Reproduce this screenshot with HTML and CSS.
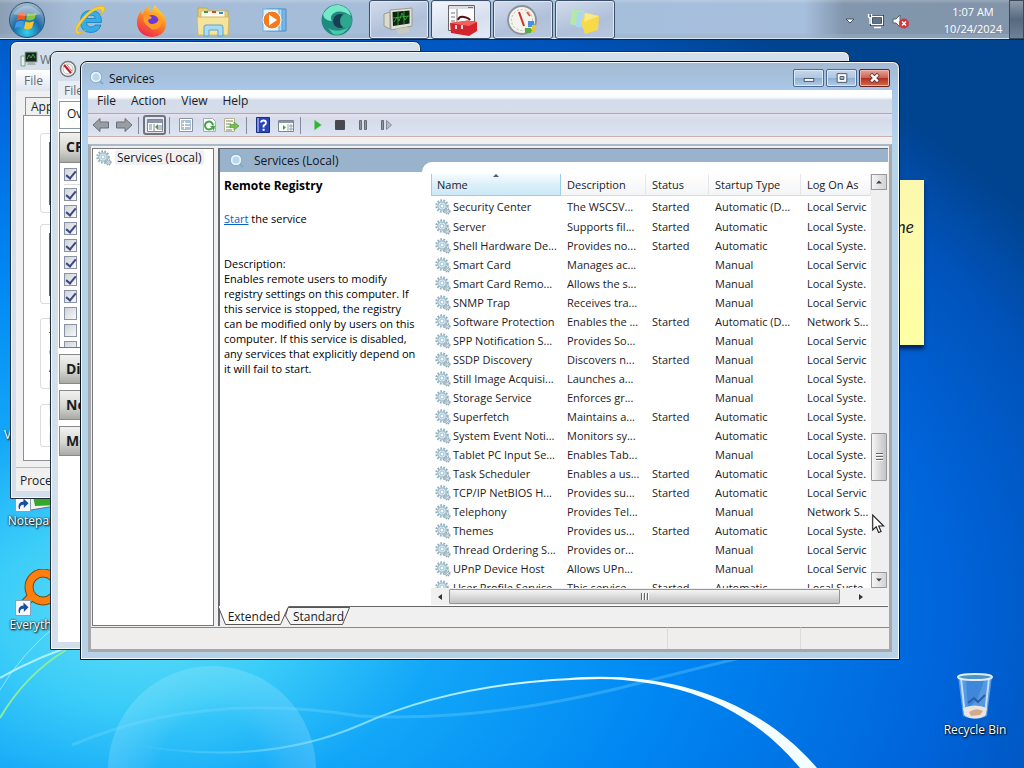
FILE: index.html
```html
<!DOCTYPE html>
<html lang="en">
<head>
<meta charset="utf-8">
<title>Services</title>
<link rel="stylesheet" href="styles.css">
</head>
<body>
<svg class="defs" width="0" height="0" aria-hidden="true">
  <defs>
    <symbol id="gear" viewBox="0 0 16 16">
      <circle cx="7" cy="7" r="5.6" fill="none" stroke="#8fb0c0" stroke-width="2.2" stroke-dasharray="1.7 1.3"/>
      <circle cx="7" cy="7" r="4.2" fill="#dcebf2" stroke="#9dbdcb" stroke-width="1.2"/>
      <circle cx="7" cy="7" r="2" fill="#fff" stroke="#8fb3c4" stroke-width=".8"/>
      <circle cx="12.3" cy="12.3" r="2.6" fill="#cfdde4" stroke="#87a0ac" stroke-width="1.3" stroke-dasharray="1.3 .8"/>
      <circle cx="12.3" cy="12.3" r="1" fill="#fff" stroke="#87a0ac" stroke-width=".6"/>
    </symbol>
    <symbol id="lens" viewBox="0 0 16 16">
      <circle cx="7" cy="7" r="4.500" fill="#b9d6ea" stroke="#e2f2fa" stroke-width="2"/>
      <circle cx="7" cy="7" r="5.800" fill="none" stroke="#7fa6c2" stroke-width=".8"/>
      <path d="M11 11.500l3 2.500" stroke="#86a8c0" stroke-width="2"/>
    </symbol>
    <symbol id="shortcut" viewBox="0 0 16 16">
      <rect x=".5" y=".5" width="15" height="15" fill="#f6faff" stroke="#8aa0b8"/>
      <path d="M4 13C2.500 8.500 5 5.500 8.500 5.500V2.500L13.500 7.200 8.800 12V8.800C6.300 8.600 4.600 10 5 13Z" fill="#1a4f9e"/>
    </symbol>
  </defs>
</svg>

<main class="desktop">
  <svg class="wallpaper" viewBox="0 0 1024 768" preserveAspectRatio="none" aria-hidden="true">
    <defs>
      <radialGradient id="sky" gradientUnits="userSpaceOnUse" cx="0" cy="0" r="1" gradientTransform="translate(140 610) scale(1080 700)">
        <stop offset="0" stop-color="#62def6"/><stop offset=".14" stop-color="#3accf8"/><stop offset=".28" stop-color="#12a6f8"/>
        <stop offset=".5" stop-color="#0086f2"/><stop offset=".75" stop-color="#0064da"/><stop offset=".9" stop-color="#0052b8"/><stop offset="1" stop-color="#00438f"/>
      </radialGradient>
      <radialGradient id="orb" cx=".5" cy=".5" r=".5"><stop offset=".5" stop-color="#fff" stop-opacity="0"/><stop offset="1" stop-color="#bff2ff" stop-opacity=".22"/></radialGradient>
      <linearGradient id="arc" x1="0" x2="1"><stop offset="0" stop-color="#8fe4ff" stop-opacity="0"/><stop offset=".6" stop-color="#8fe4ff"/><stop offset="1" stop-color="#fff"/></linearGradient>
    </defs>
    <rect width="1024" height="768" fill="url(#sky)"/>
    <circle cx="212" cy="770" r="104" fill="url(#orb)"/>
    <path d="M0 678Q40 655 90 640" fill="none" stroke="#c9f8ff" stroke-width="2" opacity=".8"/>
    <path d="M0 690Q20 655 60 622" fill="none" stroke="#c9f8ff" stroke-width="1" opacity=".6"/>
    <path d="M0 718Q25 675 66 650" fill="none" stroke="#8dec9c" stroke-width="2"/>
    <path d="M72 745Q200 690 360 716Q480 722 620 688Q690 670 740 658" fill="none" stroke="#7fdcff" stroke-width="3" opacity=".3"/>
    <path d="M130 744Q260 768 360 725Q460 680 600 678" fill="none" stroke="url(#arc)" stroke-width="2"/>
    <path d="M570 678C655 671 752 692 817 768H800C735 690 650 676 570 679Z" fill="#f4fdff"/>
  </svg>

  <div class="shortcut-label stray">V</div>
  <a class="shortcut notepad" href="#">
    <svg width="48" height="48" viewBox="0 0 48 48"><path d="M8 10L44 6 46 40 10 46Z" fill="#f4f4ee" stroke="#66a"/><path d="M14 12L46 12 44 40 20 41Z" fill="#35a82a"/><path d="M18 16h20v20" stroke="#1a6d18" fill="none"/><use href="#shortcut" x="0" y="31" width="16" height="16"/></svg>
    <span>Notepad++</span>
  </a>
  <a class="shortcut everything" href="#">
    <svg width="48" height="48" viewBox="0 0 48 48"><path d="M15 29L9 35" stroke="#7a4a10" stroke-width="9"/><circle cx="28" cy="18" r="14" fill="none" stroke="#7a4a10" stroke-width="9"/><circle cx="28" cy="18" r="14" fill="none" stroke="#ff7f0e" stroke-width="7"/><path d="M16 28L10 34" stroke="#ff7f0e" stroke-width="7"/><use href="#shortcut" x="0" y="31" width="16" height="16"/></svg>
    <span>Everything</span>
  </a>
  <a class="shortcut recycle" href="#">
    <svg width="48" height="48" viewBox="0 0 48 48">
      <path d="M7 4L41 4 36 44Q24 50 12 44Z" fill="#9cc8f2" fill-opacity=".55"/>
      <path d="M10 6L14 43M38 6L34 43" stroke="#e6f6ff" stroke-width="2" opacity=".75"/>
      <path d="M15 8L17 36 26 28 33 9Z" fill="#2c78cf" opacity=".55"/>
      <path d="M17 31l6-5 4 4 7-7" fill="none" stroke="#285ea8" stroke-width="2"/>
      <path d="M12 36Q24 31 36 36L34 44Q24 49 14 44Z" fill="#e9e6e0"/><path d="M18 40q7-5 14-1l-3 4-9 1Z" fill="#d6a98b"/>
      <ellipse cx="24" cy="5" rx="17" ry="3" fill="#4d93c8" stroke="#dcecf3" stroke-width="2"/>
    </svg>
    <span>Recycle Bin</span>
  </a>
  <div class="note">ne</div>

  <section class="window taskmgr" aria-label="Windows Task Manager">
    <header class="titlebar"><svg width="18" height="16" viewBox="0 0 18 16"><path d="M1 5h4v10H1z" fill="#e8efe8" stroke="#80a088"/><path d="M5 1h12v10H5z" fill="#16261b" stroke="#9aa"/><path d="M7 8l2-4 2 3 2-4 2 4" fill="none" stroke="#37a44a"/><path d="M8 11h6l2 3H7z" fill="#a9b0b0"/></svg><span>W</span></header>
    <div class="client">
      <nav class="menubar"><button>File</button></nav>
      <div class="tm-tabs"><button>App</button></div>
      <div class="tm-page">
        <div class="group graph"><i></i></div>
        <div class="group graph second"><i></i></div>
        <div class="group stats"><b>P</b><b>T</b><b>C</b><b>A</b><b>P</b></div>
        <div class="group kernel"><b>K</b><b>P</b><b>N</b></div>
      </div>
      <footer class="tm-status">Processes</footer>
    </div>
  </section>

  <section class="window resmon" aria-label="Resource Monitor">
    <header class="titlebar"><svg width="18" height="18" viewBox="0 0 18 18"><circle cx="9" cy="9" r="7.500" fill="#f9fafa" stroke="#777" stroke-width="1.500"/><circle cx="9" cy="9" r="5" fill="none" stroke="#bbb"/><path d="M5 5l7 8" stroke="#c01c20" stroke-width="2"/><path d="M8 5l5 6" stroke="#c66" /></svg></header>
    <div class="client">
      <nav class="menubar"><button>File</button></nav>
      <div class="rm-body">
        <div class="rm-tab">Ov</div>
        <div class="rm-list">
          <h3>CPU</h3>
          <div class="rm-checks">
            <input type="checkbox" checked aria-label="All"><hr>
            <input type="checkbox" checked aria-label="Process 1"><input type="checkbox" checked aria-label="Process 2"><input type="checkbox" checked aria-label="Process 3"><input type="checkbox" checked aria-label="Process 4"><input type="checkbox" checked aria-label="Process 5"><input type="checkbox" checked aria-label="Process 6"><input type="checkbox" checked aria-label="Process 7"><input type="checkbox" aria-label="Process 8"><input type="checkbox" aria-label="Process 9"><input type="checkbox" aria-label="Process 10">
          </div>
        </div>
        <h3>Disk</h3><h3>Network</h3><h3>Memory</h3>
      </div>
    </div>
  </section>

  <section class="window services" aria-label="Services">
    <header class="titlebar">
      <svg width="16" height="16"><use href="#lens"/></svg><span>Services</span>
      <div class="caption">
        <button aria-label="Minimize"><svg width="29" height="16" viewBox="0 0 30 16"><rect x="10.500" y="8.500" width="10" height="3" fill="#fff" stroke="#48566c"/></svg></button>
        <button aria-label="Maximize"><svg width="29" height="16" viewBox="0 0 30 16"><path d="M10.500 3.500h10v9h-10zM13.500 6.500h4v3h-4z" fill="#fff" fill-rule="evenodd" stroke="#48566c"/></svg></button>
        <button class="close" aria-label="Close"><svg width="29" height="16" viewBox="0 0 30 16"><path d="M11 4l8 8M19 4l-8 8" stroke="#5b2b2b" stroke-width="4"/><path d="M11.500 4.500l7 7M18.500 4.500l-7 7" stroke="#fff" stroke-width="2.500"/></svg></button>
      </div>
    </header>
    <div class="client">
      <nav class="menubar"><button>File</button><button>Action</button><button>View</button><button>Help</button></nav>
      <div class="toolbar">
        <button aria-label="Back"><svg width="18" height="16" viewBox="0 0 18 16"><path d="M1 8l7-6.500v3.500h8.500v6H8V14.500z" fill="#9a9ea4" stroke="#6a6f76"/></svg></button>
        <button aria-label="Forward"><svg width="18" height="16" viewBox="0 0 18 16"><path d="M17 8l-7-6.500v3.500H1.500v6H10V14.500z" fill="#9a9ea4" stroke="#6a6f76"/></svg></button>
        <hr>
        <button class="pressed" aria-label="Show console tree"><svg width="18" height="16" viewBox="0 0 18 16"><path d="M1.500 2.500h15v12h-15z" fill="#fff" stroke="#7d8793"/><path d="M2 3h14v3H2z" fill="#8b97a7"/><path d="M3 8h3M3 10h3M3 12h3M8 7v7M15 8v5M13 8v5" stroke="#7d8793"/><path d="M12 7v6l-3-3z" fill="#3ba83b"/></svg></button>
        <hr>
        <button aria-label="Properties"><svg width="16" height="16" viewBox="0 0 16 16"><path d="M1.500 1.500h13v13h-13z" fill="#fff" stroke="#8a93a0"/><path d="M3.500 3.500h9v9h-9z" fill="none" stroke="#a9bfd8"/><path d="M4 5h2M4 8h2M4 11h2M7 5h5M7 8h5M7 11h5" stroke="#6480a8"/></svg></button>
        <button aria-label="Refresh"><svg width="16" height="16" viewBox="0 0 16 16"><path d="M2.500 1.500h9l3 3v10h-12z" fill="#fff" stroke="#a5acb5"/><path d="M11 11.200A4 4 0 1 1 12 8.500" fill="none" stroke="#43a546" stroke-width="2"/><path d="M9 9h5l-1 5z" fill="#43a546"/></svg></button>
        <button aria-label="Export list"><svg width="17" height="16" viewBox="0 0 17 16"><path d="M1.500 1.500h10v13h-10z" fill="#fffef0" stroke="#b5b59a"/><path d="M3 4h7M3 7h5M3 10h5M3 13h6" stroke="#6c8a60"/><path d="M7 7.500h4V5l5 4-5 4v-2.500H7z" fill="#77c04e" stroke="#4c8f2c" stroke-width=".6"/></svg></button>
        <hr>
        <button aria-label="Help"><svg width="14" height="16" viewBox="0 0 14 16"><path d="M.5 .5h13v15H.5z" fill="#2a45b4" stroke="#172c86"/><path d="M1 1h2v14H1z" fill="#8294db"/><path d="M5 5.500Q5 3.500 7.500 3.500T10 6Q10 7.500 7.600 8.500V10.500" fill="none" stroke="#fff" stroke-width="1.800"/><path d="M6.600 11.800h2v2h-2z" fill="#fff"/></svg></button>
        <button aria-label="Show action pane"><svg width="18" height="16" viewBox="0 0 18 16"><path d="M1.500 3.500h15v11h-15z" fill="#fff" stroke="#7d8793"/><path d="M2 4h14v2H2z" fill="#8b97a7"/><path d="M12 9h4M12 12h4M11 7v7M14 7v7" stroke="#9aa3ae"/><path d="M6 8v5l3-2.500z" fill="#3ba83b"/></svg></button>
        <hr>
        <button aria-label="Start service"><svg width="16" height="16" viewBox="0 0 16 16"><path d="M5.500 3l7 5-7 5z" fill="#2fb52f" stroke="#7bd27b" stroke-width=".6"/></svg></button>
        <button aria-label="Stop service"><svg width="16" height="16" viewBox="0 0 16 16"><rect x="3" y="3" width="10" height="10" rx="1" fill="#46494f"/></svg></button>
        <button aria-label="Pause service"><svg width="16" height="16" viewBox="0 0 16 16"><path d="M4.500 3.500h2v9h-2zM9.500 3.500h2v9h-2z" fill="#8d929b" stroke="#666b75"/></svg></button>
        <button aria-label="Restart service"><svg width="16" height="16" viewBox="0 0 16 16"><path d="M3.500 3.500h2v9h-2z" fill="#8d929b" stroke="#666b75"/><path d="M8.500 3.500l5 4.500-5 4.500z" fill="#b5bac2" stroke="#858a94"/></svg></button>
      </div>
      <div class="console">
        <aside class="tree"><a href="#"><svg width="16" height="16"><use href="#gear"/></svg><span>Services (Local)</span></a></aside>
        <div class="result">
          <div class="result-head"><svg width="16" height="16"><use href="#lens"/></svg>Services (Local)</div>
          <div class="extended">
            <div class="info">
              <h2>Remote Registry</h2>
              <p class="action"><a href="#">Start</a> the service</p>
              <p>Description:<br>Enables remote users to modify registry settings on this computer. If this service is stopped, the registry can be modified only by users on this computer. If this service is disabled, any services that explicitly depend on it will fail to start.</p>
            </div>
            <div class="list">
              <div class="rows">
                <table>
                  <colgroup><col class="c-name"><col class="c-desc"><col class="c-stat"><col class="c-type"><col></colgroup>
                  <thead><tr><th class="sorted">Name</th><th>Description</th><th>Status</th><th>Startup Type</th><th>Log On As</th></tr></thead>
                  <tbody>
                    <tr><td><svg><use href="#gear"/></svg>Security Center</td><td>The WSCSV...</td><td>Started</td><td>Automatic (D...</td><td>Local Servic</td></tr>
                    <tr><td><svg><use href="#gear"/></svg>Server</td><td>Supports fil...</td><td>Started</td><td>Automatic</td><td>Local Syste.</td></tr>
                    <tr><td><svg><use href="#gear"/></svg>Shell Hardware De...</td><td>Provides no...</td><td>Started</td><td>Automatic</td><td>Local Syste.</td></tr>
                    <tr><td><svg><use href="#gear"/></svg>Smart Card</td><td>Manages ac...</td><td></td><td>Manual</td><td>Local Servic</td></tr>
                    <tr><td><svg><use href="#gear"/></svg>Smart Card Remo...</td><td>Allows the s...</td><td></td><td>Manual</td><td>Local Syste.</td></tr>
                    <tr><td><svg><use href="#gear"/></svg>SNMP Trap</td><td>Receives tra...</td><td></td><td>Manual</td><td>Local Servic</td></tr>
                    <tr><td><svg><use href="#gear"/></svg>Software Protection</td><td>Enables the ...</td><td>Started</td><td>Automatic (D...</td><td>Network S...</td></tr>
                    <tr><td><svg><use href="#gear"/></svg>SPP Notification S...</td><td>Provides So...</td><td></td><td>Manual</td><td>Local Servic</td></tr>
                    <tr><td><svg><use href="#gear"/></svg>SSDP Discovery</td><td>Discovers n...</td><td>Started</td><td>Manual</td><td>Local Servic</td></tr>
                    <tr><td><svg><use href="#gear"/></svg>Still Image Acquisi...</td><td>Launches a...</td><td></td><td>Manual</td><td>Local Syste.</td></tr>
                    <tr><td><svg><use href="#gear"/></svg>Storage Service</td><td>Enforces gr...</td><td></td><td>Manual</td><td>Local Syste.</td></tr>
                    <tr><td><svg><use href="#gear"/></svg>Superfetch</td><td>Maintains a...</td><td>Started</td><td>Automatic</td><td>Local Syste.</td></tr>
                    <tr><td><svg><use href="#gear"/></svg>System Event Noti...</td><td>Monitors sy...</td><td></td><td>Automatic</td><td>Local Syste.</td></tr>
                    <tr><td><svg><use href="#gear"/></svg>Tablet PC Input Se...</td><td>Enables Tab...</td><td></td><td>Manual</td><td>Local Syste.</td></tr>
                    <tr><td><svg><use href="#gear"/></svg>Task Scheduler</td><td>Enables a us...</td><td>Started</td><td>Automatic</td><td>Local Syste.</td></tr>
                    <tr><td><svg><use href="#gear"/></svg>TCP/IP NetBIOS H...</td><td>Provides su...</td><td>Started</td><td>Automatic</td><td>Local Servic</td></tr>
                    <tr><td><svg><use href="#gear"/></svg>Telephony</td><td>Provides Tel...</td><td></td><td>Manual</td><td>Network S...</td></tr>
                    <tr><td><svg><use href="#gear"/></svg>Themes</td><td>Provides us...</td><td>Started</td><td>Automatic</td><td>Local Syste.</td></tr>
                    <tr><td><svg><use href="#gear"/></svg>Thread Ordering S...</td><td>Provides or...</td><td></td><td>Manual</td><td>Local Servic</td></tr>
                    <tr><td><svg><use href="#gear"/></svg>UPnP Device Host</td><td>Allows UPn...</td><td></td><td>Manual</td><td>Local Servic</td></tr>
                    <tr><td><svg><use href="#gear"/></svg>User Profile Service</td><td>This service...</td><td>Started</td><td>Automatic</td><td>Local Syste.</td></tr>
                  </tbody>
                </table>
              </div>
              <div class="vscroll">
                <button aria-label="Scroll up"><svg width="8" height="6" viewBox="0 0 8 6"><path d="M1 4.500l3-3 3 3z" fill="#444"/></svg></button>
                <div class="track"><div class="thumb"><i></i><i></i><i></i></div></div>
                <button aria-label="Scroll down"><svg width="8" height="6" viewBox="0 0 8 6"><path d="M1 1.500l3 3 3-3z" fill="#444"/></svg></button>
              </div>
              <div class="hscroll">
                <button aria-label="Scroll left"><svg width="6" height="8" viewBox="0 0 6 8"><path d="M5 1v6L1 4z" fill="#333"/></svg></button>
                <div class="track"><div class="thumb"><i></i><i></i><i></i></div></div>
                <button aria-label="Scroll right"><svg width="6" height="8" viewBox="0 0 6 8"><path d="M1 1v6l4-3z" fill="#333"/></svg></button>
              </div>
            </div>
          </div>
          <div class="views">
            <svg width="134" height="20" viewBox="0 0 134 20" aria-hidden="true"><path d="M70 1.500H131.500L124.500 18.500H72.500L67.500 10Z" fill="#f6f6f6" stroke="#555"/><path d="M0 -1L7.500 18.500H62.500L71 -1Z" fill="#fff"/><path d="M0 0L7.500 18.500H62.500L70 1.500H131.500" fill="none" stroke="#555"/></svg>
            <button>Extended</button><button>Standard</button>
          </div>
        </div>
      </div>
      <footer class="statusbar"><span></span><span></span><span></span></footer>
    </div>
  </section>

  <header class="taskbar">
    <button class="start" aria-label="Start"><svg width="38" height="38" viewBox="0 0 38 38"><defs><radialGradient id="so" cx=".5" cy=".85" r=".8"><stop offset="0" stop-color="#35d0ee"/><stop offset=".5" stop-color="#1b6ba8"/><stop offset="1" stop-color="#9fb4c8"/></radialGradient></defs><circle cx="19" cy="19" r="17.500" fill="url(#so)" stroke="#2c5378"/><path d="M10 13q4-3 8-1l-1.500 7q-4-2-8 1z" fill="#ee5a24"/><path d="M19.500 12q4 2 9-.5L26.500 18q-4 2.500-8.500.5z" fill="#86c440"/><path d="M8 21.500q4-3 8-1L14.500 27q-4-2-8 .5z" fill="#3e9be8"/><path d="M17.500 20.500q4 2 8.500-.5L24 27q-4 2.500-8 .5z" fill="#fbc52d"/><path d="M5 13Q19 -4 33 13Q19 17 5 13Z" fill="#fff" opacity=".3"/></svg></button>
    <button class="pin" aria-label="Internet Explorer"><svg width="34" height="34" viewBox="0 0 34 34"><path fill-rule="evenodd" d="M28.500 19.500H13.500q.5 4.500 4.500 4.500 3 0 4-2h6q-2.500 7.500-10 7.500Q7.500 29.500 7.500 18.500T18 7.500q11 0 10.500 12zM22.500 15.500q-.5-3.500-4.500-3.500T13.500 15.500z" fill="#35aee8" stroke="#147cc0" stroke-width=".8"/><path d="M4 31Q-2 27 10 14T31 3.500Q34 6 27 13Q30 7 27 6.500Q20 6 11 17T5 28Q6 31 13 27Q7 32 4 31Z" fill="#f7d038" stroke="#d9a818" stroke-width=".5"/></svg></button>
    <button class="pin" aria-label="Firefox"><svg width="34" height="34" viewBox="0 0 34 34"><defs><linearGradient id="ff" x1=".8" x2=".3" y1="0" y2="1"><stop offset="0" stop-color="#ffe23a"/><stop offset=".45" stop-color="#ff8a22"/><stop offset="1" stop-color="#f0244e"/></linearGradient></defs><path d="M20 2q2 4 6 7 6 5 5 13-1 11-14 12Q3 33 2 20 2 13 6 8q0 3 2 3 1-5 6-8-1 4 2 7 2-5 4-8z" fill="url(#ff)"/><circle cx="17" cy="19" r="7" fill="#6a3ad8"/><path d="M8 13q6-3 9 2l-4 2q1 6 8 3 4-3 2-8 6 6 2 12-6 5-12 0-5-4-5-11z" fill="#ff9a28"/></svg></button>
    <button class="pin" aria-label="File Explorer"><svg width="36" height="34" viewBox="0 0 36 34"><path d="M3 5h9l2 3h19v23H3z" fill="#e8cf78" stroke="#c4a84e"/><path d="M6 8h24v10H6z" fill="#fbfbf0" stroke="#c9bd7a"/><path d="M9 8h4v2H9z" fill="#3a9d4f"/><path d="M17 8h4v2h-4z" fill="#c94d3a"/><path d="M24 9h4v2h-4z" fill="#3e86c6"/><path d="M2 14h32l-1 18H3z" fill="#f6e49c" stroke="#d2b862"/><path d="M9 33V24q0-2 2-2h15q2 0 2 2v9h-5v-6h-9v6z" fill="#a8dcf4" stroke="#5fa5cc"/></svg></button>
    <button class="pin" aria-label="Media Player"><svg width="34" height="34" viewBox="0 0 34 34"><path d="M12 6h17v22H12z" fill="#79b6e6" stroke="#4a8cc4"/><path d="M9 6h16v22H9z" fill="#b5dbf5" stroke="#5c9dd0"/><path d="M6 6h16v22H6z" fill="#dff0fb" stroke="#6daadc"/><circle cx="15" cy="17" r="9" fill="#f47b20" stroke="#fff"/><path d="M12 11.500l8 5.500-8 5.500z" fill="#fff"/></svg></button>
    <button class="pin" aria-label="Browser"><svg width="34" height="34" viewBox="0 0 34 34"><circle cx="17" cy="17" r="15.500" fill="#218a80"/><path d="M3 11Q9 1 19 2Q29 4 31 13Q21 6 14 10Q9 13 12 18Q4 18 3 11Z" fill="#74e8c8"/><circle cx="20" cy="18" r="7" fill="#173f52"/><path d="M8 25Q17 31 29 24Q22 34 13 31Z" fill="#49c9a8"/><ellipse cx="26" cy="18" rx="6" ry="7" fill="#2ea58d"/></svg></button>
    <div class="tasks">
      <button aria-label="Task Manager"><svg width="34" height="32" viewBox="0 0 34 32"><path d="M2 10l6-2v17l-6-3z" fill="#d9dccf" stroke="#9a9c8c"/><path d="M8 6l22-2v18L9 26z" fill="#dfe0d6" stroke="#9a9c8c"/><path d="M10.500 8l17-1.500v13L11 22z" fill="#0d2412"/><path d="M12 18l3-5 2 4 3-8 3 7 3-4M11 14l16-2M16 8v13M22 7v13" fill="none" stroke="#3ab53a" stroke-width=".8"/><path d="M14 25l11-2 3 5-11 2z" fill="#c8cabd"/></svg></button>
      <button class="active" aria-label="Services console"><svg width="34" height="34" viewBox="0 0 34 34"><path d="M4.500 2.500h26v25h-26z" fill="#fbfcfd" stroke="#666"/><path d="M5 3h25v3H5z" fill="#d9dde2"/><path d="M24 4.500h5M7 10h4M7 14h4M7 18h4M13 6v20" stroke="#777"/><path d="M14 17q1-4 6-3t6 3" fill="none" stroke="#4a1214" stroke-width="2"/><path d="M6 20l18-2.500L33 19v9l-8 5L7 30z" fill="#d3242c"/><path d="M6 20l18-2.500L33 19l-8 4z" fill="#f0605e"/><path d="M12 22v4M18 22v4" stroke="#ddd" stroke-width="2"/></svg></button>
      <button aria-label="Resource Monitor"><svg width="34" height="34" viewBox="0 0 34 34"><circle cx="16" cy="17" r="14" fill="#f4f4ef" stroke="#8d9299" stroke-width="2"/><circle cx="16" cy="17" r="10.500" fill="none" stroke="#b8b8ae" stroke-dasharray="2 2"/><path d="M13 9l5 14" stroke="#d42a22" stroke-width="2"/><path d="M21 9l3 4" stroke="#e05a40" stroke-width="2"/><path d="M22 18h6v6h-6z" fill="#4c8fe0"/><path d="M26 22h4v6h-4z" fill="#e6c92c"/><path d="M19 25h6v5h-6z" fill="#58ab43"/></svg></button>
      <button aria-label="Sticky Notes"><svg width="36" height="32" viewBox="0 0 36 32"><path d="M5 5l12 2-3 16L3 20z" fill="#b5e8a8"/><path d="M10 8l14 1-2 15-13-1z" fill="#a8d8f4"/><path d="M18 9l14 3-1 14-13 4-4-12z" fill="#f8d94a"/><path d="M18 9l14 3-15 6z" fill="#fbe986"/></svg></button>
    </div>
    <div class="tray">
      <svg width="10" height="6" viewBox="0 0 10 6"><path d="M1 1h8L5 5z" fill="#fff" stroke="#456"/></svg>
      <svg width="18" height="18" viewBox="0 0 18 18"><path d="M5.500 4.500h11v8h-11z" fill="#5e7389" stroke="#263646" stroke-width="3"/><path d="M5.500 4.500h11v8h-11zM8 15.500h7M2.500 2v3q2 2 3 0V2M4 6v6" fill="none" stroke="#fff" stroke-width="1.300"/></svg>
      <svg width="18" height="16" viewBox="0 0 18 16"><path d="M1 6h3l4-4v12l-4-4H1z" fill="#fff" stroke="#526375"/><circle cx="12" cy="10.500" r="5" fill="#d8343a"/><path d="M10 8.500l4 4M14 8.500l-4 4" stroke="#fff" stroke-width="1.500"/></svg>
    </div>
    <time class="clock"><span>1:07 AM</span><span>10/24/2024</span></time>
    <button class="peek" aria-label="Show desktop"></button>
  </header>

  <svg class="cursor" width="13" height="20" viewBox="0 0 13 20" aria-hidden="true"><path d="M.7 1v15l3.500-3.200 2.400 5.700 2.500-1-2.400-5.500h5z" fill="#fff" stroke="#222" stroke-width="1.100"/></svg>
</main>
</body>
</html>
```
FILE: styles.css
```css
* { box-sizing: border-box; }
html, body { height: 100%; margin: 0; }
body { font: 12px/15px "Segoe UI", "Open Sans", "Noto Sans", sans-serif; color: #1b1b24; overflow: hidden; }
button { font: inherit; color: inherit; background: none; border: 0; padding: 0; margin: 0; }
svg { display: block; flex: none; }
h2, h3, p { margin: 0; font-size: inherit; }
.defs { position: absolute; }

.desktop { position: relative; height: 100%; min-height: 480px; overflow: hidden; background: #0078e8; }
.wallpaper { position: absolute; inset: 0; width: 100%; height: 100%; }

/* taskbar */
.taskbar { position: absolute; inset: 0 0 auto 0; height: 40px; display: flex; align-items: stretch;
  background: linear-gradient(#ffffff30, #ffffff00 4px), linear-gradient(90deg, #8c9fb5, #a5bcd7 70px, #a6bfdc calc(100% - 220px), #8296ad calc(100% - 180px), #8194aa);
  border-bottom: 1px solid #10283f; box-shadow: inset 0 -1px #d8e6f2, inset 0 -5px #9db1cb66; }
.taskbar button { display: flex; align-items: center; justify-content: center; }
.start { width: 54px; }
.pin { width: 61px; }
.start + .pin { width: 67px; padding-left: 4px; }
.pin:nth-of-type(6) { width: 65px; }
.tasks { display: flex; gap: 2px; flex: 1; }
.tasks button { width: 60px; border: 1px solid #3b5068; border-radius: 3px; background: linear-gradient(160deg, #d2dcec, #b0c0da 60%, #b9c8de); box-shadow: inset 0 0 0 1px #dfe9f5; }
.tasks .active { background: linear-gradient(160deg, #f4f7fc, #d5dfee 60%, #e5ebf5); }
.tray { display: flex; align-items: center; gap: 8px; padding: 3px 27px 0 0; }
.tray svg:first-child { margin-right: 3px; }
.clock { display: flex; flex-direction: column; align-items: center; justify-content: center; width: 72px; color: #fff; font-size: 11px; line-height: 17px; }
.peek { width: 15px; background: linear-gradient(#8e9bac, #56697f 50%, #6d8199); border: 1px solid #3a4a5c; }

/* desktop items */
.shortcut { position: absolute; display: flex; flex-direction: column; align-items: center; width: 76px; color: #fff; text-decoration: none; text-shadow: 1px 1px 2px #000, 0 0 2px #000; }
.shortcut span { line-height: 16px; }
.notepad { left: 1px; top: 465px; }
.everything { left: 1px; top: 569px; }
.recycle { right: 11px; bottom: 30px; gap: 2px; }
.shortcut-label { position: absolute; color: #fff; text-shadow: 1px 1px 2px #000; }
.stray { left: 4px; top: 427px; }
.note { position: absolute; right: 100px; top: 180px; width: 160px; height: 165px; padding: 38px 10px 0 0; text-align: right; background: linear-gradient(#fbf8ae, #ffffa4); box-shadow: 0 4px 4px #00235a; font: italic 17px/18px Lato, sans-serif; }
.cursor { position: absolute; left: 872px; top: 514px; }

/* windows */
.window { position: absolute; display: flex; flex-direction: column; border: 1px solid #1f2c3b; border-radius: 7px 7px 0 0; padding: 0 7px 7px; background: #d3dfeb; box-shadow: inset 0 0 0 1px #f3f8fc; }
.titlebar { display: flex; align-items: center; flex: none; }
.client { display: flex; flex-direction: column; flex: 1; min-height: 0; overflow: hidden; background: #f0f0f0; }
.menubar { display: flex; flex: none; }

.taskmgr { left: 10px; top: 41px; right: 603px; bottom: 269px; padding: 0 5px 7px; color: #666b74; }
.taskmgr .titlebar { gap: 2px; height: 28px; padding: 6px 0 0 4px; }
.taskmgr .menubar { height: 21px; padding-left: 8px; background: linear-gradient(#fff, #dfe4ef); }
.tm-tabs { display: flex; flex: none; height: 24px; align-items: flex-end; padding: 6px 0 0 9px; }
.tm-tabs button { height: 18px; padding: 0 5px; border: 1px solid #8d8f96; border-bottom: 0; background: #f0f0f0; color: #222; }
.tm-page { flex: 1; min-height: 0; overflow: hidden; margin: 0 7px; padding: 17px 16px; border: 1px solid #8d8f96; background: #fff; }
.group { height: 80px; margin-bottom: 11px; padding: 8px; border: 1px solid #dcdcdc; border-radius: 3px; }
.group i { display: block; height: 63px; width: 140px; background: #6a625f; }
.group b { display: block; margin-top: 1px; font-weight: 400; color: #222; font-size: 11px; line-height: 15px; }
.group.second { margin-bottom: 14px; }
.group.stats { height: 71px; padding-top: 0; margin-bottom: 15px; }
.group.stats b:first-child, .group.kernel b:first-child { margin-top: -7px; }
.group.kernel { height: 43px; padding-top: 0; }
.tm-status { flex: none; margin-top: 6px; height: 24px; padding: 5px 4px; border-top: 1px solid #b8b8c4; color: #222; }

.resmon { left: 50px; top: 51px; right: 174px; bottom: 118px; }
.resmon .titlebar { height: 29px; padding: 4px 0 0 1px; }
.resmon .menubar { height: 18px; padding-left: 6px; color: #666b74; background: #e9eef5; }
.rm-body { flex: 1; padding: 2px 1px; background: #fff; }
.rm-tab { height: 28px; margin-bottom: 3px; padding: 4px 7px; border: 1px solid #8a97a8; background: #fff; }
.rm-list { border: 1px solid #777; height: 216px; overflow: hidden; }
.rm-body h3 { height: 30px; margin-top: 6px; padding: 6px; font-size: 14px; line-height: 16px; background: linear-gradient(#f2f2f0, #d6d6d2 55%, #aaaaa5); border: 1px solid #888; }
.rm-list h3 { margin: 0; border-width: 0 0 1px; }
.rm-checks { display: flex; flex-direction: column; gap: 4px; padding: 5px 4px; }
.rm-checks input { appearance: none; margin: 0; width: 13px; height: 13px; flex: none; border: 1px solid #8a93a3; background: linear-gradient(135deg, #cfd3da, #f8f8f8); display: grid; place-items: center; }
.rm-checks input:checked::after { content: ""; width: 4px; height: 8px; border: solid #3c4a80; border-width: 0 2px 2px 0; transform: rotate(40deg); margin-bottom: 2px; }
.rm-checks hr { width: 100%; height: 1px; margin: -1px 0; border: 0; background: #ddd; }

.services { left: 80px; top: 61px; right: 124px; bottom: 108px; background: linear-gradient(#a3b9d0, #a9c8e8 29px, #b5d3ea 80px, #b7d2e6); border-color: #0c1622; }
.services .titlebar { height: 28px; padding: 4px 0 0 1px; gap: 4px; color: #10161e; }
.caption { display: flex; gap: 2px; margin: 0 2px 0 auto; }
.caption button { width: 31px; height: 18px; border: 1px solid #4d6a94; border-radius: 2px; background: linear-gradient(#c5d7ea, #aec6e2 50%, #90aed2 51%, #b3cde8); box-shadow: inset 0 0 0 1px #dce9f6; }
.caption .close { border-color: #6d1f22; background: linear-gradient(#e2a79e, #cf5f50 50%, #b32f20 51%, #d36a4a); box-shadow: inset 0 0 0 1px #efb7ab; }
.services .menubar { height: 24px; padding: 0 8px 2px; gap: 13px; background: linear-gradient(#fff 6px, #f1f4fb 8px, #d3dce9 10px, #d8dcea); border-bottom: 1px solid #a9adbb; }
.services .menubar button { padding: 0 1px; }
.toolbar { display: flex; flex: none; align-items: center; height: 23px; padding-left: 1px; background: linear-gradient(#e6e2ef, #d5dbe9 6px, #dbe5f4); border-bottom: 1px solid #cbb0ac; }
.toolbar button { display: grid; place-items: center; width: 23px; height: 20px; }
.toolbar hr { width: 1px; height: 17px; margin: 0 4px 0 3px; border: 0; background: #858b98; }
.toolbar .pressed { border: 2px solid #6d7380; border-radius: 3px; background: #e3e6ec; }
.console { flex: 1; min-height: 0; display: flex; gap: 4px; margin-top: 7px; padding: 2px 1px 1px; border: solid #a5a9ae; border-width: 2px 3px 0 3px; border-top-color: #aab9ca; }
.tree { width: 122px; flex: none; border: 1px solid #777; background: #fff; padding: 0 3px; }
.tree a { display: inline-flex; align-items: center; gap: 3px; height: 17px; padding-right: 3px; color: inherit; text-decoration: none; }
.tree span { padding: 0 2px; background: #f1f1f3; border-radius: 2px; }
.result { flex: 1; min-width: 0; display: flex; flex-direction: column; border-left: 2px solid #666b73; }
.result-head { display: flex; align-items: center; gap: 9px; height: 24px; flex: none; padding-left: 9px; background: #9ab3cc; border-top: 1px solid #606a78; color: #10161e; }
.extended { flex: 1; min-height: 0; display: flex; background: #fff; font-size: 11px; }
.info { width: 202px; flex: none; padding: 6px 0 0 4px; color: #000; }
.info h2 { font-size: 12px; }
.info .action { margin: 18px 0 30px; }
.info a { color: #0a62c4; }
.list { flex: 1; min-width: 0; display: grid; grid-template-columns: 1fr 17px; grid-template-rows: 1fr 17px; margin-top: -10px; padding: 12px 0 1px 9px; background: #fff; border-top-left-radius: 10px; }
.rows { overflow: hidden; min-height: 0; }
table { width: 100%; table-layout: fixed; border-collapse: separate; border-spacing: 0; }
.c-name { width: 130px; } .c-desc { width: 85px; } .c-stat { width: 63px; } .c-type { width: 92px; }
th, td { padding: 0 0 0 6px; text-align: left; font-weight: 400; white-space: nowrap; overflow: hidden; }
th { height: 22px; background: linear-gradient(#fff, #f3f4f5); border-right: 1px solid #e4e6ea; border-bottom: 1px solid #d9dbe0; }
th.sorted { padding-left: 5px; background: linear-gradient(#f6fbfe, #dcf0fa 50%, #cbe8f6); border: solid #9fcfe6; border-width: 0 1px 1px; position: relative; }
th.sorted::before { content: ""; position: absolute; left: 61px; top: 0; border: 3px solid transparent; border-top: 0; border-bottom-color: #557; }
td { height: 19px; line-height: 17px; }
tbody tr:first-child td { height: 21px; }
td:first-child { padding-left: 4px; }
td svg { display: inline-block; width: 16px; height: 16px; margin-right: 2px; vertical-align: -4px; }
.vscroll { display: flex; flex-direction: column; min-height: 0; background: #efefef; padding: 0 1px 0 0; }
.vscroll button, .hscroll button { display: grid; place-items: center; flex: none; }
.vscroll button { height: 16px; border: 1px solid #999; background: linear-gradient(90deg, #f4f4f4, #d2d2d2); }
.track { flex: 1; display: flex; min-width: 0; min-height: 0; }
.thumb { display: flex; align-items: center; justify-content: center; gap: 1px; border: 1px solid #959595; border-radius: 1px; }
.vscroll .track { flex-direction: column; }
.vscroll .thumb { flex-direction: column; height: 48px; margin-top: 243px; background: linear-gradient(90deg, #f6f6f6, #dcdcdc 50%, #c4c4c4); }
.thumb i { background: #666; }
.vscroll .thumb i { width: 7px; height: 2px; border-bottom: 1px solid #fff; }
.hscroll { grid-column: 1 / 3; display: flex; background: #f0f0f0; }
.hscroll button { width: 18px; }
.hscroll button:last-child { width: 48px; padding-right: 7px; }
.hscroll .track { padding: 1px 0; }
.hscroll .thumb { flex: 1; background: linear-gradient(#f4f4f4, #dadada 50%, #c2c2c2); }
.hscroll .thumb i { width: 2px; height: 7px; border-right: 1px solid #fff; }
.views { position: relative; display: flex; flex: none; height: 20px; border-top: 1px solid #666; }
.views svg { position: absolute; left: -2px; top: -1px; }
.views button { position: relative; width: 64px; padding-left: 1px; }
.views button:first-of-type { width: 66px; padding-left: 2px; }
.statusbar { display: flex; flex: none; height: 25px; border: solid #a5a9ae; border-width: 0 3px 3px; background: #f0eeed; }
.statusbar span { border-right: 1px solid #dcdada; border-top: 1px solid #888; }
.statusbar span:first-child { flex: 1; }
.statusbar span:nth-child(2) { width: 133px; }
.statusbar span:last-child { width: 88px; border-right: 0; }
```
